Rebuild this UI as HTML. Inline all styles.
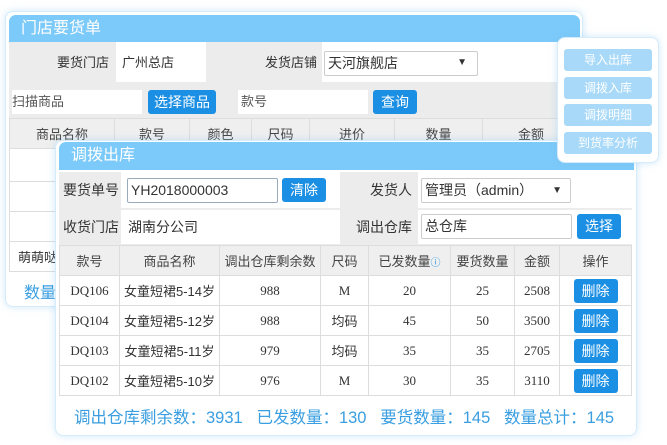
<!DOCTYPE html>
<html><head><meta charset="utf-8"><style>
*{box-sizing:border-box;margin:0;padding:0}
body{width:667px;height:445px;background:#fff;position:relative;overflow:hidden;font-family:"Liberation Sans","Noto Sans CJK SC",sans-serif;font-size:13px;color:#333}
.abs{position:absolute}
.panel{position:absolute;background:#fff;border:1px solid #d6ecfa;border-radius:8px;box-shadow:0 0 8px rgba(120,190,240,.35)}
.title{position:absolute;background:#7ccaf9;color:#fff;font-size:16px;border-radius:7px 7px 0 0;padding-left:12px}
.btn{position:absolute;background:#1a8fe3;color:#fff;border-radius:3px;text-align:center;font-size:14px}
.gray{background:#ececec}
.inp{position:absolute;background:#fff;border:1px solid #ccc;border-radius:2px;padding-left:3px;font-size:13px}
.rb{position:absolute;background:#a9d9f8;color:#fff;border-radius:3px;text-align:center;font-size:12px;height:22px;line-height:22px;z-index:11}
table{border-collapse:collapse;position:absolute;font-size:13px}
td{border:1px solid #ddd;text-align:center;height:30px}
th{border:1px solid #ddd;background:#efefef;font-weight:normal;color:#444;height:30px}
.del{display:inline-block;background:#1a8fe3;color:#fff;border-radius:3px;width:44px;height:24px;line-height:24px;font-size:14px}
.serif{font-family:"Liberation Serif","Noto Serif CJK SC",serif}
</style></head><body>

<div class="panel" style="left:5px;top:11px;width:578px;height:296px"></div>
<div class="title" style="left:9px;top:15px;width:571px;height:27px;line-height:27px">门店要货单</div>
<div class="abs gray" style="left:9px;top:42px;width:571px;height:40px"></div>
<div class="abs" style="left:9px;top:42px;width:100px;height:40px;line-height:42px;text-align:right">要货门店</div>
<div class="abs" style="left:116px;top:42px;width:90px;height:40px;background:#fff;line-height:42px;padding-left:6px">广州总店</div>
<div class="abs" style="left:240px;top:42px;width:77px;line-height:42px;text-align:right">发货店铺</div>
<div class="abs" style="left:322px;top:42px;width:258px;height:40px;background:#fff"></div>
<div class="inp" style="left:324px;top:51px;width:154px;height:25px;line-height:22px;font-size:14px">天河旗舰店<span style="position:absolute;right:10px;font-size:10px">▼</span></div>
<div class="abs gray" style="left:9px;top:82px;width:571px;height:36px"></div>
<div class="abs" style="left:12px;top:90px;width:130px;height:24px;background:#fff;line-height:24px;color:#555">扫描商品</div>
<div class="btn" style="left:148px;top:90px;width:68px;height:24px;line-height:24px">选择商品</div>
<div class="abs" style="left:238px;top:90px;width:130px;height:24px;background:#fff;line-height:24px;padding-left:3px;color:#555">款号</div>
<div class="btn" style="left:373px;top:90px;width:44px;height:24px;line-height:24px">查询</div>
<table style="left:9px;top:118px;width:571px">
<tr><th style="width:105px">商品名称</th><th style="width:75px">款号</th><th style="width:62px">颜色</th><th style="width:58px">尺码</th><th style="width:85px">进价</th><th style="width:88px">数量</th><th>金额</th></tr>
<tr><td style="height:33px"></td><td></td><td></td><td></td><td></td><td></td><td></td></tr>
<tr><td style="text-align:right">朋</td><td></td><td></td><td></td><td></td><td></td><td></td></tr>
<tr><td style="text-align:right">朋</td><td></td><td></td><td></td><td></td><td></td><td></td></tr>
<tr><td style="text-align:left;padding-left:8px">萌萌哒</td><td></td><td></td><td></td><td></td><td></td><td></td></tr>
</table>
<div class="abs" style="left:24px;top:279px;font-size:16px;color:#3a9ee0">数量</div>

<div class="panel" style="left:55px;top:140px;width:582px;height:296px"></div>
<div class="title" style="left:59px;top:142px;width:575px;height:28px;line-height:28px">调拨出库</div>
<div class="abs gray" style="left:59px;top:172px;width:573px;height:73px"></div>
<div class="abs" style="left:63px;top:172px;width:56px;line-height:36px;font-size:14px">要货单号</div>
<div class="abs" style="left:121px;top:172px;width:219px;height:36px;background:#fff"></div>
<div class="inp" style="left:127px;top:178px;width:151px;height:25px;line-height:23px;font-size:14px;border-color:#9ab">YH2018000003</div>
<div class="btn" style="left:282px;top:178px;width:44px;height:24px;line-height:24px">清除</div>
<div class="abs" style="left:340px;top:172px;width:72px;line-height:36px;text-align:right;font-size:14px">发货人</div>
<div class="abs" style="left:418px;top:172px;width:214px;height:36px;background:#fff"></div>
<div class="inp" style="left:421px;top:178px;width:150px;height:25px;line-height:23px;font-size:14px">管理员（admin）<span style="position:absolute;right:8px;font-size:10px">▼</span></div>
<div class="abs" style="left:63px;top:210px;width:56px;line-height:34px;font-size:14px">收货门店</div>
<div class="abs" style="left:121px;top:210px;width:219px;height:34px;background:#fff;line-height:34px;padding-left:7px;font-size:14px">湖南分公司</div>
<div class="abs" style="left:340px;top:210px;width:72px;line-height:34px;text-align:right;font-size:14px">调出仓库</div>
<div class="abs" style="left:418px;top:210px;width:214px;height:34px;background:#fff"></div>
<div class="inp" style="left:421px;top:214px;width:151px;height:25px;line-height:23px;font-size:14px">总仓库</div>
<div class="btn" style="left:577px;top:214px;width:44px;height:25px;line-height:25px">选择</div>
<table style="left:59px;top:245px;width:573px">
<tr><th style="width:60px">款号</th><th style="width:100px">商品名称</th><th style="width:101px">调出仓库剩余数</th><th style="width:48px">尺码</th><th style="width:82px">已发数量<span style="color:#1a8fe3;font-size:10px">ⓘ</span></th><th style="width:64px">要货数量</th><th style="width:45px">金额</th><th>操作</th></tr>
<tr><td class="serif">DQ106</td><td>女童短裙5-14岁</td><td class="serif">988</td><td class="serif">M</td><td class="serif">20</td><td class="serif">25</td><td class="serif">2508</td><td><span class="del">删除</span></td></tr>
<tr><td class="serif">DQ104</td><td>女童短裙5-12岁</td><td class="serif">988</td><td>均码</td><td class="serif">45</td><td class="serif">50</td><td class="serif">3500</td><td><span class="del">删除</span></td></tr>
<tr><td class="serif">DQ103</td><td>女童短裙5-11岁</td><td class="serif">979</td><td>均码</td><td class="serif">35</td><td class="serif">35</td><td class="serif">2705</td><td><span class="del">删除</span></td></tr>
<tr><td class="serif">DQ102</td><td>女童短裙5-10岁</td><td class="serif">976</td><td class="serif">M</td><td class="serif">30</td><td class="serif">35</td><td class="serif">3110</td><td><span class="del">删除</span></td></tr>
</table>
<div class="abs" style="left:74px;top:404px;font-size:16.5px;color:#3a9ee0;white-space:nowrap">调出仓库剩余数：3931&nbsp;&nbsp;&nbsp;已发数量：130&nbsp;&nbsp;&nbsp;要货数量：145&nbsp;&nbsp;&nbsp;数量总计：145</div>

<div class="panel" style="left:557px;top:37px;width:102px;height:126px;z-index:10"></div>
<div class="rb" style="left:564px;top:49px;width:88px">导入出库</div>
<div class="rb" style="left:564px;top:77px;width:88px">调拨入库</div>
<div class="rb" style="left:564px;top:104px;width:88px">调拨明细</div>
<div class="rb" style="left:564px;top:132px;width:88px">到货率分析</div>
</body></html>
